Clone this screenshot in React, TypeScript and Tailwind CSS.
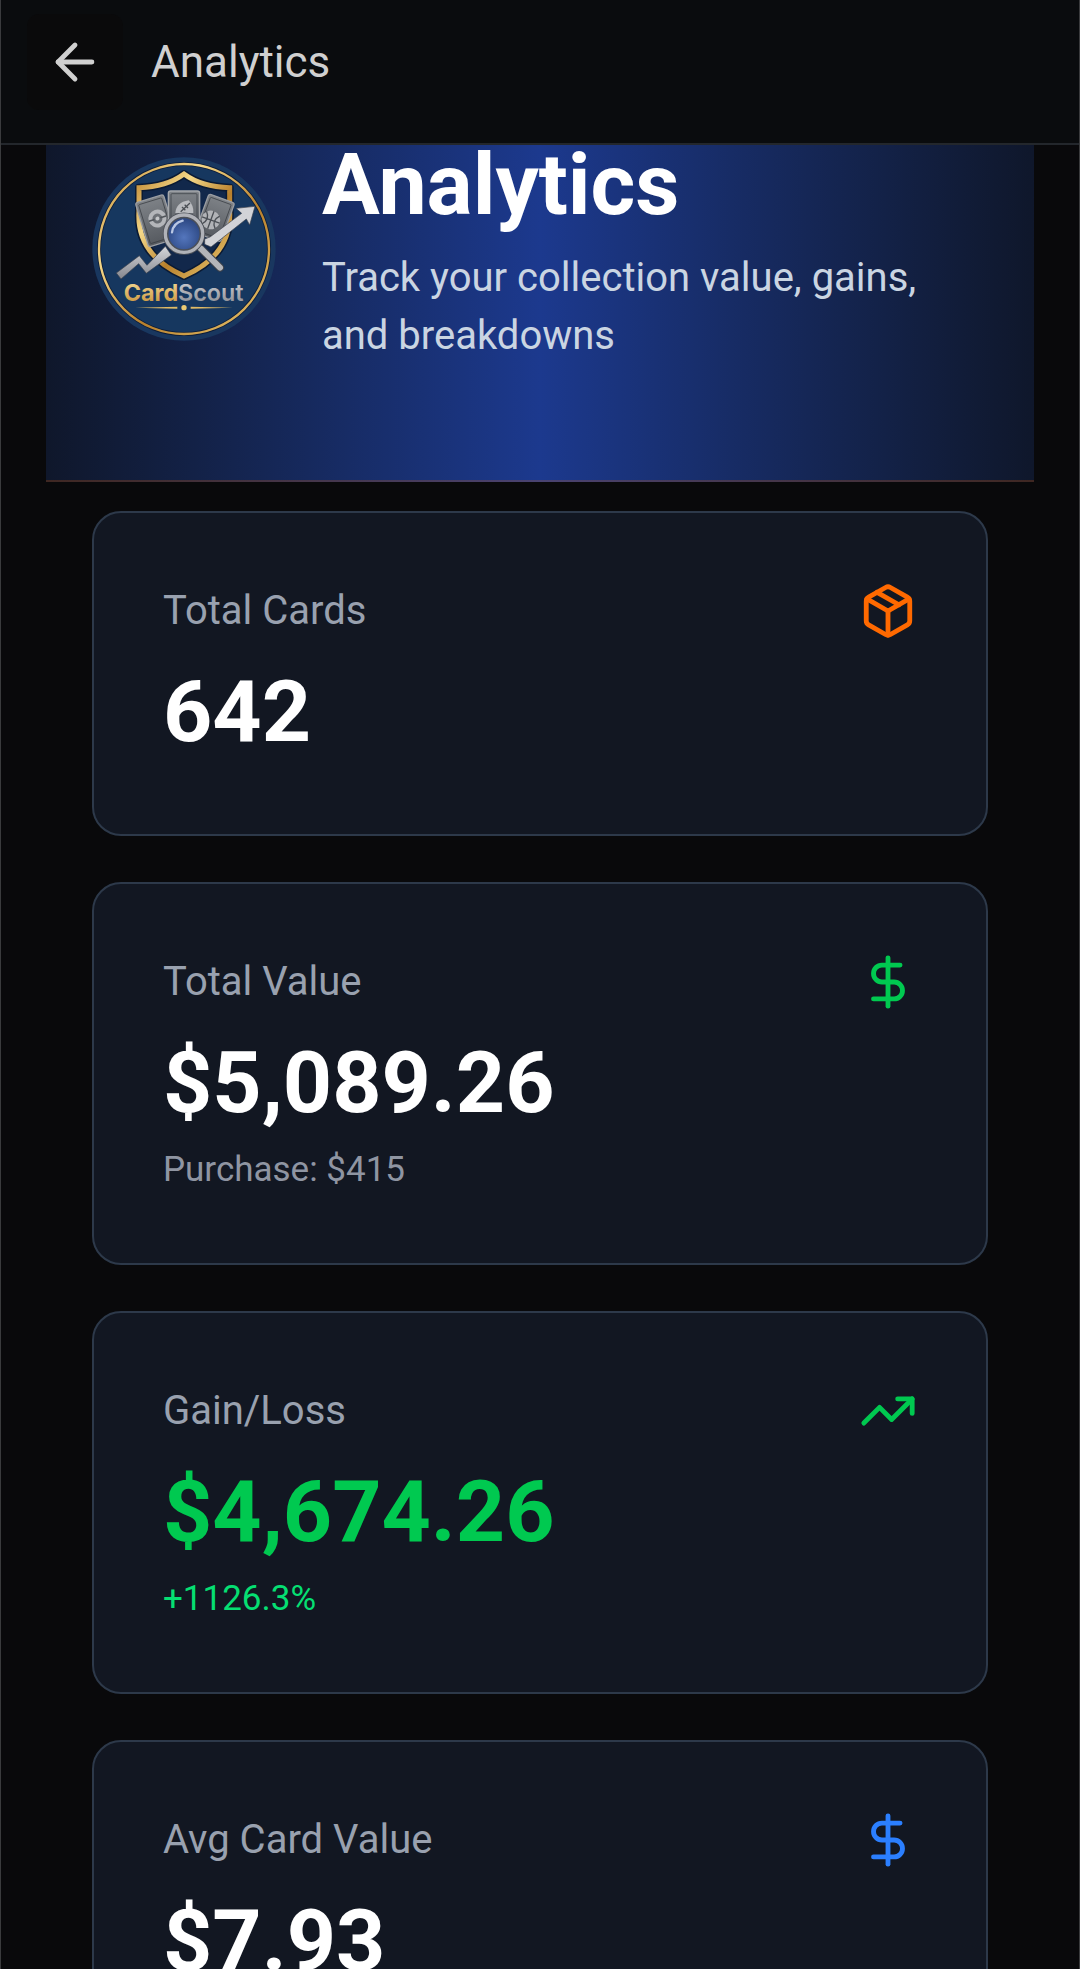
import React from 'react';
import { ArrowLeft, DollarSign, Package, TrendingUp, type LucideIcon } from 'lucide-react';

type Stat = {
  label: string;
  value: string;
  note?: string;
  icon: LucideIcon;
  iconClass: string;
  valueClass: string;
  noteClass?: string;
};

const stats: Stat[] = [
  {
    label: 'Total Cards',
    value: '642',
    icon: Package,
    iconClass: 'text-[#ff6900]',
    valueClass: 'text-white',
  },
  {
    label: 'Total Value',
    value: '$5,089.26',
    note: 'Purchase: $415',
    icon: DollarSign,
    iconClass: 'text-[#00c950]',
    valueClass: 'text-white',
    noteClass: 'text-[#8f95a2]',
  },
  {
    label: 'Gain/Loss',
    value: '$4,674.26',
    note: '+1126.3%',
    icon: TrendingUp,
    iconClass: 'text-[#00c950]',
    valueClass: 'text-[#00c950]',
    noteClass: 'text-[#05df72]',
  },
  {
    label: 'Avg Card Value',
    value: '$7.93',
    icon: DollarSign,
    iconClass: 'text-[#2b7fff]',
    valueClass: 'text-white',
  },
];

function Logo() {
  return (
    <svg viewBox="36 54 552 552" className="mt-3 size-[184px] shrink-0" role="img" aria-label="CardScout logo">
      <defs>
        <linearGradient id="gold" x1="0" y1="0" x2="1" y2="1">
          <stop offset="0" stopColor="#c08a35" />
          <stop offset="0.3" stopColor="#f5d888" />
          <stop offset="0.6" stopColor="#b8802c" />
          <stop offset="1" stopColor="#eccb74" />
        </linearGradient>
        <linearGradient id="goldText" x1="0" y1="0" x2="0" y2="1">
          <stop offset="0" stopColor="#f8e2a0" />
          <stop offset="1" stopColor="#c68d34" />
        </linearGradient>
        <linearGradient id="silver" x1="0" y1="0" x2="0" y2="1">
          <stop offset="0" stopColor="#d5d6da" />
          <stop offset="1" stopColor="#85878e" />
        </linearGradient>
        <linearGradient id="card" x1="0" y1="0" x2="0" y2="1">
          <stop offset="0" stopColor="#7f8388" />
          <stop offset="1" stopColor="#55595f" />
        </linearGradient>
        <radialGradient id="lens" cx="0.5" cy="0.6" r="0.6">
          <stop offset="0" stopColor="#5476bd" />
          <stop offset="1" stopColor="#253f78" />
        </radialGradient>
      </defs>

      <circle cx="312" cy="330" r="275" fill="#19375f" />
      <circle cx="312" cy="330" r="255" fill="#16375f" stroke="#0c1c38" strokeWidth="12" />
      <circle cx="312" cy="330" r="255" fill="none" stroke="url(#gold)" strokeWidth="7" />

      {/* shield */}
      <path
        d="M312 105 Q365 144 449 146 V215 Q456 348 312 411 Q168 348 177 215 V146 Q259 144 312 105Z"
        fill="#12284b"
        stroke="#0b1a33"
        strokeWidth="24"
        strokeLinejoin="round"
      />
      <path
        d="M312 105 Q365 144 449 146 V215 Q456 348 312 411 Q168 348 177 215 V146 Q259 144 312 105Z"
        fill="none"
        stroke="url(#gold)"
        strokeWidth="15"
      />

      {/* trading cards */}
      <g transform="rotate(-17 222 246)">
        <rect x="184" y="178" width="88" height="138" rx="7" fill="url(#card)" stroke="#9a9da2" strokeWidth="4" />
        <rect x="192" y="186" width="72" height="122" rx="3" fill="none" stroke="#35393f" strokeWidth="2" />
        <circle cx="234" cy="242" r="21" fill="none" stroke="#b4b6ba" strokeWidth="12" />
        <path d="M207 242 H225 M243 242 H261" stroke="#50545a" strokeWidth="5" />
        <circle cx="234" cy="242" r="6" fill="#c4c6c9" />
      </g>
      <g transform="rotate(20 402 240)">
        <rect x="362" y="174" width="82" height="124" rx="7" fill="url(#card)" stroke="#9a9da2" strokeWidth="4" />
        <rect x="370" y="182" width="66" height="108" rx="3" fill="none" stroke="#35393f" strokeWidth="2" />
        <circle cx="394" cy="246" r="28" fill="#b1b3b7" />
        <path
          d="M394 218 V274 M366 246 H422 M373 226 Q392 246 373 266 M415 226 Q396 246 415 266"
          fill="none"
          stroke="#4b4f55"
          strokeWidth="4"
        />
      </g>
      <rect x="265" y="156" width="94" height="130" rx="7" fill="url(#card)" stroke="#a5a8ac" strokeWidth="4" />
      <rect x="273" y="164" width="78" height="114" rx="3" fill="none" stroke="#35393f" strokeWidth="2" />
      <path d="M286 222 Q288 190 326 184 Q342 200 340 222Z" fill="#b9bbbf" />
      <path d="M302 218 L330 192 M306 204 L316 214 M314 197 L324 207" stroke="#4b4f55" strokeWidth="4" />

      {/* trend arrow */}
      <path
        d="M109 402 L178 350 L201 379 L256 322 L274 348 L199 403 L176 374 L123 420Z"
        fill="url(#silver)"
        stroke="#3b404a"
        strokeWidth="2"
      />
      <path
        d="M374 300 L390 294 L485 223 L468 208 L525 202 L509 258 L499 240 L393 324 L374 316Z"
        fill="#d2d3d7"
        stroke="#3b404a"
        strokeWidth="2"
      />

      {/* magnifier */}
      <path d="M362 328 L420 386" stroke="#3b404a" strokeWidth="24" strokeLinecap="round" />
      <path d="M362 328 L420 386" stroke="#b3b5ba" strokeWidth="18" strokeLinecap="round" />
      <circle cx="312" cy="284" r="55" fill="url(#lens)" stroke="#4c5058" strokeWidth="17" />
      <circle cx="312" cy="284" r="56" fill="none" stroke="#b0b2b8" strokeWidth="10" />
      <path d="M276 280 Q280 252 308 245" fill="none" stroke="#b9c7e4" strokeWidth="7" strokeLinecap="round" />

      <text x="131" y="485" fontSize="70" fontWeight="700" fontFamily="Inter, sans-serif" fill="url(#goldText)">
        Card<tspan fontWeight="600" fill="url(#silver)">Scout</tspan>
      </text>
      <path d="M166 506 L292 503 V509Z M458 506 L332 503 V509Z" fill="#e0bb66" />
      <circle cx="312" cy="506" r="8" fill="#eccb74" />
    </svg>
  );
}

function StatCard({ stat }: { stat: Stat }) {
  const Icon = stat.icon;
  return (
    <section className="rounded-[29px] border-2 border-[#2d394a] bg-[#121722] px-[69px] pt-[69px] pb-[70px]">
      <div className="flex items-center justify-between">
        <h2 className="text-[40px] leading-[58px] text-[#99a1af]">{stat.label}</h2>
        <Icon className={`size-[58px] shrink-0 ${stat.iconClass}`} aria-hidden="true" />
      </div>
      <p className={`mt-5 text-[86px] leading-[104px] font-bold ${stat.valueClass}`}>{stat.value}</p>
      {stat.note && <p className={`mt-3 text-[35px] leading-[46px] ${stat.noteClass}`}>{stat.note}</p>}
    </section>
  );
}

function App() {
  return (
    <div className="flex h-screen flex-col border-x border-[#3a3b3d] bg-[#09090b] font-[Roboto,sans-serif]">
      <header className="flex shrink-0 items-center gap-7 border-b-2 border-[#23272c] bg-[#0a0c0e] px-[26px] pt-[14px] pb-[33px]">
        <button
          type="button"
          aria-label="Go back"
          className="flex size-24 items-center justify-center rounded-xl bg-[#0a0a0b] text-[#d0d0d0]"
        >
          <ArrowLeft className="size-[58px]" />
        </button>
        <span className="text-[44px] leading-[58px] text-[#d0d0d0]">Analytics</span>
      </header>

      <main className="flex-1 overflow-y-auto px-[45px] [scrollbar-width:none]">
        <div className="flex items-start gap-[46px] border-b-2 border-[#ff6900]/20 bg-linear-to-r from-[#0f172b] via-[#1c398e] to-[#0f172b] px-[46px] pb-[115px]">
          <Logo />
          <div>
            <h1 className="text-[86px] leading-[80px] font-bold text-white">Analytics</h1>
            <p className="mt-6 text-[40px] leading-[58px] text-[#cad5e2]">
              Track your collection value, gains, and breakdowns
            </p>
          </div>
        </div>

        <div className="flex flex-col gap-[46px] px-[46px] pt-[29px] pb-[46px]">
          {stats.map((stat) => (
            <StatCard key={stat.label} stat={stat} />
          ))}
        </div>
      </main>
    </div>
  );
}

export default App;
